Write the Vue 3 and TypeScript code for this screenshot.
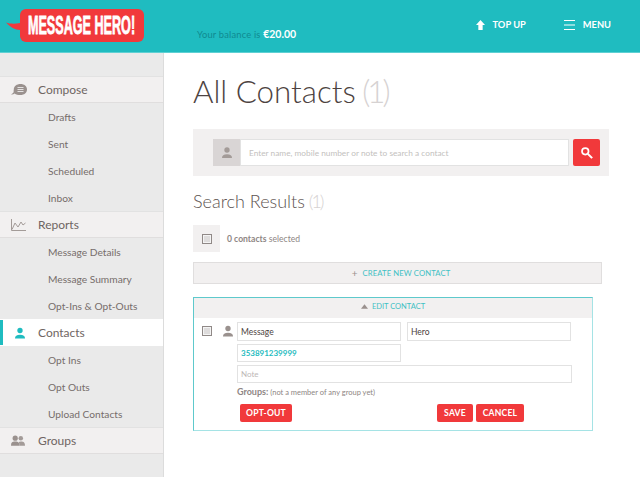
<template>
  <div class="page">
    <header class="topbar">
      <div class="logo">
        <svg class="logo-tail" width="14" height="8" viewBox="0 0 14 8"><path d="M0 0.5C4 2 9 2 14 1V8C9 8 4 5 0 0.5Z" fill="#f1393b" /></svg>
        <div class="logo-bubble"><span class="logo-text">MESSAGE HERO!</span></div>
      </div>
      <div class="balance">Your balance is <b>€20.00</b></div>
      <div class="top-actions">
        <a class="top-link">
          <svg width="9" height="10" viewBox="0 0 10 11"><path d="M5 0L10 5.5H7.4V11H2.6V5.5H0Z" fill="#fff" /></svg>
          TOP UP
        </a>
        <a class="top-link">
          <svg width="11" height="10" viewBox="0 0 11 10"><path d="M0 .5H11M0 5H11M0 9.5H11" stroke="#fff" fill="none" /></svg>
          MENU
        </a>
      </div>
    </header>

    <div class="body">
      <aside class="sidebar">
        <template v-for="group in nav" :key="group.name">
          <div :class="['nav-head', { active: group.active }]">
            <span class="nav-icon">
              <svg v-if="group.icon === 'chat'" width="16" height="11" viewBox="0 0 16 11">
                <path d="M9.5 0C13.2 0 16 2.2 16 5.5S13.2 11 9.5 11C7 11 5 11 3.6 9.6 2.6 10.4 1.4 10.6 0 10.4 1 9.8 2 9.2 2.8 8 2.3 7.2 2.8 6.4 2.8 5.5 2.8 2.2 5.8 0 9.5 0Z" fill="#9a918e" />
                <path d="M6.5 3.5H12.5M6.5 5.5H12.5M6.5 7.5H12.5" stroke="#e4e2e2" fill="none" />
              </svg>
              <svg v-else-if="group.icon === 'chart'" width="15" height="12" viewBox="0 0 15 12">
                <path d="M.5 0V11.5H15M1 10.5L4 4 7 8 10 3 12 6 14.5 4" stroke="#a39b98" fill="none" />
              </svg>
              <svg v-else-if="group.icon === 'person'" width="10" height="12" viewBox="0 0 12 13">
                <circle cx="6" cy="3.5" r="3.2" fill="#1fbcc0" />
                <path d="M0 13C0 10 2 8.6 6 8.6S12 10 12 13Z" fill="#1fbcc0" />
              </svg>
              <svg v-else width="14" height="11" viewBox="0 0 15 11">
                <circle cx="10.5" cy="3" r="2.4" fill="#a39b98" />
                <path d="M9 11H15C15 8 14 6.5 10.5 6.5 9.5 6.5 8.8 6.7 8.3 7 8.8 8 9 9.5 9 11Z" fill="#a39b98" />
                <circle cx="4.5" cy="3" r="2.8" fill="#9a918e" />
                <path d="M0 11C0 8 1 6.6 4.5 6.6S9 8 9 11Z" fill="#9a918e" />
              </svg>
            </span>
            {{ group.name }}
          </div>
          <div v-for="item in group.items" :key="item" class="nav-sub">{{ item }}</div>
        </template>
      </aside>

      <main class="content">
        <h1 class="title">All Contacts <span class="count">(1)</span></h1>

        <div class="search-bar">
          <div class="search-person">
            <svg width="10" height="11" viewBox="0 0 12 13"><circle cx="6" cy="3.5" r="3.2" fill="#a39b98" /><path d="M0 13C0 10 2 8.6 6 8.6S12 10 12 13Z" fill="#a39b98" /></svg>
          </div>
          <div class="search-input">Enter name, mobile number or note to search a contact</div>
          <button class="search-btn">
            <svg width="12" height="12" viewBox="0 0 14 14"><circle cx="5" cy="5" r="3.8" fill="none" stroke="#fff" stroke-width="2" /><path d="M8 8L13 13" stroke="#fff" stroke-width="2.4" /></svg>
          </button>
        </div>

        <h2 class="subtitle">Search Results <span class="count small">(1)</span></h2>

        <div class="select-row">
          <div class="select-box"><span class="check"></span></div>
          <div class="select-text"><b>0 contacts</b> selected</div>
        </div>

        <div class="create-bar"><span class="plus">+</span> CREATE NEW CONTACT</div>

        <section class="card">
          <div class="card-head">
            <svg width="7" height="5" viewBox="0 0 8 5"><path d="M4 0L8 5H0Z" fill="#9a918e" /></svg>
            EDIT CONTACT
          </div>
          <div class="card-body">
            <span class="check card-check"></span>
            <svg class="card-person" width="10" height="12" viewBox="0 0 12 13"><circle cx="6" cy="3.5" r="3.2" fill="#9a918e" /><path d="M0 13C0 10 2 8.6 6 8.6S12 10 12 13Z" fill="#9a918e" /></svg>
            <div class="fields">
              <div class="field-row">
                <div class="field half">Message</div>
                <div class="field half">Hero</div>
              </div>
              <div class="field half phone">353891239999</div>
              <div class="field full note">Note</div>
              <div class="groups"><b>Groups:</b> <span>(not a member of any group yet)</span></div>
              <div class="actions">
                <button class="btn opt">OPT-OUT</button>
                <div class="actions-right">
                  <button class="btn save">SAVE</button>
                  <button class="btn cancel">CANCEL</button>
                </div>
              </div>
            </div>
          </div>
        </section>
      </main>
    </div>
  </div>
</template>

<script setup lang="ts">
interface NavGroup {
  name: string;
  icon: string;
  active?: boolean;
  items: string[];
}

const nav: NavGroup[] = [
  { name: 'Compose', icon: 'chat', items: ['Drafts', 'Sent', 'Scheduled', 'Inbox'] },
  { name: 'Reports', icon: 'chart', items: ['Message Details', 'Message Summary', 'Opt-Ins & Opt-Outs'] },
  { name: 'Contacts', icon: 'person', active: true, items: ['Opt Ins', 'Opt Outs', 'Upload Contacts'] },
  { name: 'Groups', icon: 'people', items: [] },
];
</script>

<style>
html, body {
  margin: 0;
  background: #fff;
}
</style>

<style scoped>
.page {
  width: 640px;
  height: 477px;
  overflow: hidden;
  font-family: Lato, "Open Sans", sans-serif;
  color: #6f6563;
  display: flex;
  flex-direction: column;
}

.topbar {
  height: 53px;
  box-sizing: border-box;
  background: #1fbcc0;
  border-bottom: 1px solid #5fd0d3;
  display: flex;
}

.logo {
  display: flex;
  align-items: flex-start;
  margin: 9px 0 0 6px;
  width: 138px;
}

.logo-tail {
  margin-top: 13px;
  flex: none;
}

.logo-bubble {
  width: 124px;
  height: 33px;
  flex: none;
  background: #f1393b;
  border-radius: 6px;
  display: flex;
  align-items: center;
  justify-content: center;
}

.logo-text {
  display: block;
  flex: none;
  font-family: "Liberation Sans", sans-serif;
  font-weight: 700;
  font-size: 26px;
  line-height: 33px;
  color: #fff;
  -webkit-text-stroke: 0.8px #fff;
  white-space: nowrap;
  transform: scaleX(0.485);
}

.balance {
  margin: 27px 0 0 53px;
  font-size: 9.3px;
  line-height: 14px;
  letter-spacing: 0.2px;
  color: #0f8a90;
  white-space: nowrap;
}

.balance b {
  color: #fff;
  font-size: 10.5px;
  font-weight: 700;
  letter-spacing: 0;
}

.top-actions {
  margin-left: auto;
  display: flex;
  align-items: center;
  gap: 38px;
  padding: 0 29px 3px 0;
}

.top-link {
  display: flex;
  align-items: center;
  gap: 8px;
  color: #fff;
  font-size: 9.3px;
  font-weight: 700;
}

.body {
  flex: 1;
  display: flex;
  min-height: 0;
}

.sidebar {
  width: 164px;
  flex: none;
  background: #eaeaea;
  border-right: 1px solid #dcdcdc;
  box-sizing: border-box;
  padding-top: 23px;
}

.nav-head {
  height: 27px;
  box-sizing: border-box;
  display: flex;
  align-items: center;
  background: #f2f0f0;
  border-top: 1px solid #e2e2e2;
  border-bottom: 1px solid #e0dede;
  font-size: 12px;
  color: #6f6563;
}

.nav-head.active {
  background: #fff;
  border-color: #fff;
  box-shadow: inset 3px 0 0 #1fbcc0;
}

.nav-icon {
  width: 38px;
  padding-left: 11px;
  box-sizing: border-box;
  display: flex;
  align-items: center;
}

.nav-head.active .nav-icon {
  padding-left: 15px;
}

.nav-sub {
  height: 27px;
  display: flex;
  align-items: center;
  padding-left: 48px;
  font-size: 10.2px;
  color: #766d6a;
}

.content {
  flex: 1;
  padding-left: 29px;
  min-width: 0;
}

.title {
  margin: 19px 0 0;
  font-size: 31.3px;
  line-height: 38px;
  font-weight: 300;
  color: #4d4341;
}

.count {
  color: #d6d2d2;
  letter-spacing: -3px;
  margin-left: -2px;
}

.count.small {
  letter-spacing: -2px;
  margin-left: -1px;
}

.search-bar {
  width: 416px;
  height: 47px;
  margin-top: 19px;
  background: #f2f0f0;
  box-sizing: border-box;
  padding: 10px 9px 10px 20px;
  display: flex;
  align-items: stretch;
}

.search-person {
  width: 27px;
  background: #d9d5d5;
  display: flex;
  align-items: center;
  justify-content: center;
}

.search-input {
  flex: 1;
  background: #fff;
  border: 1px solid #e2e2e2;
  box-sizing: border-box;
  display: flex;
  align-items: center;
  padding-left: 8px;
  font-size: 8.3px;
  color: #c3bfbe;
}

.search-btn {
  width: 27px;
  margin-left: 4px;
  background: #f1393b;
  border: none;
  border-radius: 2px;
  padding: 0;
  display: flex;
  align-items: center;
  justify-content: center;
}

.subtitle {
  margin: 14px 0 0;
  font-size: 18px;
  line-height: 22px;
  font-weight: 300;
  color: #5c5250;
}

.select-row {
  margin-top: 13px;
  display: flex;
  align-items: center;
  gap: 7px;
  font-size: 8.6px;
  color: #8e8684;
}

.select-box {
  width: 27px;
  height: 27px;
  background: #f2f0f0;
  display: flex;
  align-items: center;
  justify-content: center;
}

.check {
  width: 8px;
  height: 8px;
  display: block;
  flex: none;
  background: #dedcdc;
  border: 1px solid #908987;
  box-shadow: inset 0 0 0 1px #f4f4f4;
}

.select-text b {
  font-weight: 700;
}

.create-bar {
  width: 409px;
  height: 22px;
  margin-top: 10px;
  box-sizing: border-box;
  padding-left: 7px;
  background: #f2f0f0;
  border: 1px solid #e0dede;
  display: flex;
  align-items: center;
  justify-content: center;
  gap: 5px;
  font-size: 7.7px;
  letter-spacing: 0.1px;
  color: #3fc0c4;
}

.plus {
  color: #9a918e;
  font-size: 10px;
}

.card {
  width: 400px;
  height: 134px;
  margin-top: 13px;
  box-sizing: border-box;
  border: 1px solid #a5e3e5;
  border-top-color: #5ec9cc;
  border-left-color: #5ec9cc;
}

.card-head {
  height: 20px;
  box-sizing: border-box;
  padding-bottom: 4px;
  background: #f2f0f0;
  display: flex;
  align-items: center;
  justify-content: center;
  gap: 4px;
  font-size: 7.5px;
  color: #3fc0c4;
}

.card-body {
  display: flex;
  align-items: flex-start;
  padding: 4px 0 0 8px;
}

.card-check {
  margin-top: 4px;
}

.card-person {
  margin: 3px 0 0 11px;
  flex: none;
}

.fields {
  margin-left: 4px;
  width: 335px;
  display: flex;
  flex-direction: column;
}

.field-row {
  display: flex;
  gap: 6px;
}

.field {
  box-sizing: border-box;
  height: 19px;
  background: #fff;
  border: 1px solid #e2e2e2;
  padding-left: 3px;
  display: flex;
  align-items: center;
  font-size: 8.5px;
  color: #4d4341;
}

.half {
  width: 164px;
}

.phone {
  height: 18px;
  margin-top: 3px;
  font-size: 8px;
  font-weight: 700;
  color: #1fbcc0;
}

.note {
  height: 18px;
  margin-top: 3px;
  font-size: 8px;
  color: #bdb8b7;
}

.full {
  width: 335px;
}

.groups {
  margin-top: 3px;
  font-size: 7.5px;
  line-height: 11px;
  color: #8e8684;
}

.groups b {
  font-size: 9px;
  font-weight: 700;
}

.actions {
  margin-top: 6px;
  padding-left: 3px;
  display: flex;
  justify-content: space-between;
  width: 284px;
}

.actions-right {
  display: flex;
  gap: 3px;
}

.btn {
  height: 18px;
  border: none;
  border-radius: 2px;
  background: #f1393b;
  color: #fff;
  font-family: inherit;
  font-size: 8.6px;
  font-weight: 700;
  letter-spacing: 0.2px;
  padding: 0;
}

.opt {
  width: 52px;
}

.save {
  width: 36px;
}

.cancel {
  width: 48px;
}
</style>
